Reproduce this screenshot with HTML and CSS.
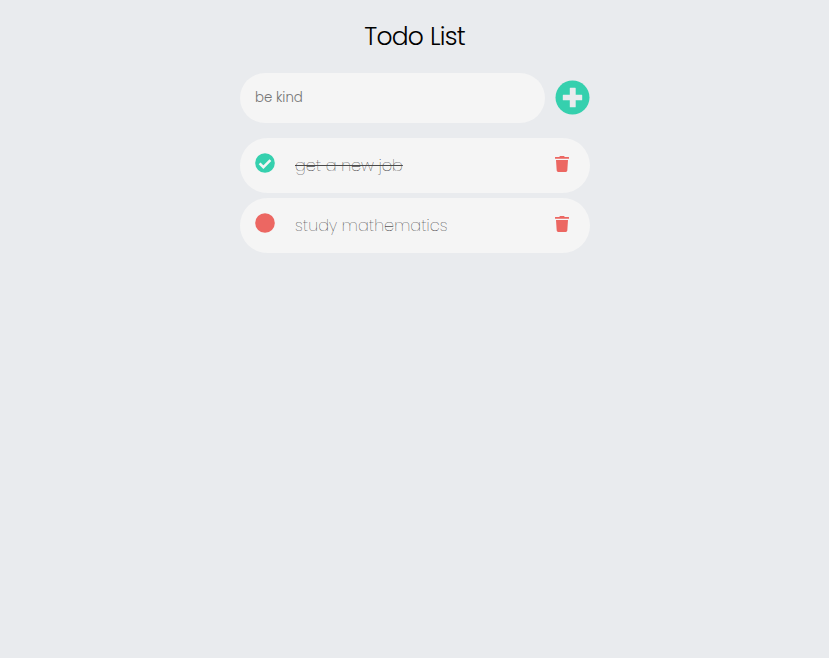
FILE: index.html
```html
<!DOCTYPE html>
<html lang="en">
<head>
<meta charset="utf-8">
<title>Todo List</title>
<link rel="stylesheet" href="styles.css">
</head>
<body>
<main class="app">
  <h1 class="title">Todo List</h1>
  <form class="entry">
    <input class="entry-input" type="text" value="be kind" aria-label="New task">
    <button class="add" type="button" aria-label="Add">
      <svg width="35" height="35" viewBox="0 0 35 35"><circle cx="17.5" cy="17.5" r="17" fill="#35d0ae"/><path d="M15.3 7.7h4.9q.5 0 .5.5v6.6h6q.5 0 .5.5v4.4q0 .5-.5.5h-6v6.6q0 .5-.5.5h-4.9q-.5 0-.5-.5v-6.6H8.3q-.5 0-.5-.5v-4.4q0-.5.5-.5h6.5V8.200q0-.5.5-.5z" fill="#e9ebee"/></svg>
    </button>
  </form>
  <ul class="list">
    <li class="item">
      <svg class="status" viewBox="0 0 20 20"><circle cx="10" cy="10" r="9.8" fill="#35d0ae"/><path d="M4.6 10.3l3.8 3.8 7-7" fill="none" stroke="#f5f5f5" stroke-width="2.6"/></svg>
      <span class="text done">get a new job</span>
      <svg class="trash" viewBox="0 0 14 16"><path d="M.3 1h4l.6-1h4.2l.6 1h4q.3 0 .3.3v1.4H0V1.3Q0 1 .3 1zM1 4h12l-.7 10.6q-.1 1.4-1.5 1.4H3.2q-1.4 0-1.5-1.4z" fill="#ec6762"/></svg>
    </li>
    <li class="item">
      <svg class="status" viewBox="0 0 20 20"><circle cx="10" cy="10" r="9.8" fill="#ec6762"/></svg>
      <span class="text">study mathematics</span>
      <svg class="trash" viewBox="0 0 14 16"><path d="M.3 1h4l.6-1h4.2l.6 1h4q.3 0 .3.3v1.4H0V1.3Q0 1 .3 1zM1 4h12l-.7 10.6q-.1 1.4-1.5 1.4H3.2q-1.4 0-1.5-1.4z" fill="#ec6762"/></svg>
    </li>
  </ul>
</main>
</body>
</html>
```
FILE: styles.css
```css
* { box-sizing: border-box; }
body {
  margin: 0;
  background: #e9ebee;
  font-family: Poppins, Lato, "Open Sans", sans-serif;
}
.app { width: 350px; margin: 0 auto; }
.title {
  margin: 0;
  height: 73px;
  padding-top: 18px;
  font-size: 25px;
  line-height: 37px;
  font-weight: 300;
  letter-spacing: -0.8px;
  word-spacing: 1px;
  text-align: center;
  color: #000;
}
.entry { display: flex; align-items: center; gap: 10px; margin: 0 0 15px; }
.entry-input {
  width: 305px;
  height: 50px;
  padding: 0 15px 1px 15.5px;
  border: 0;
  border-radius: 25px;
  outline: 0;
  background: #f5f5f5;
  color: #757575;
  font: 300 13.333px Poppins, Lato, sans-serif;
}
.add { width: 35px; height: 35px; margin-bottom: 1px; padding: 0; border: 0; background: none; }
.add svg { display: block; }
.list { display: flex; flex-direction: column; gap: 5px; margin: 0; padding: 0; list-style: none; }
.item {
  display: flex;
  align-items: center;
  height: 55px;
  padding: 0 21px 0 15px;
  border-radius: 27.5px;
  background: #f5f5f5;
}
.status { width: 20px; height: 20px; margin: 0 20.5px 5px 0; }
.text { flex: none; font-size: 16px; font-weight: 200; letter-spacing: 0.07px; line-height: 25px; color: #000; }
.done { letter-spacing: 0; text-decoration: line-through #4a4a4a; }
.trash { width: 14px; height: 16px; margin: 0 0 3px auto; }
```
